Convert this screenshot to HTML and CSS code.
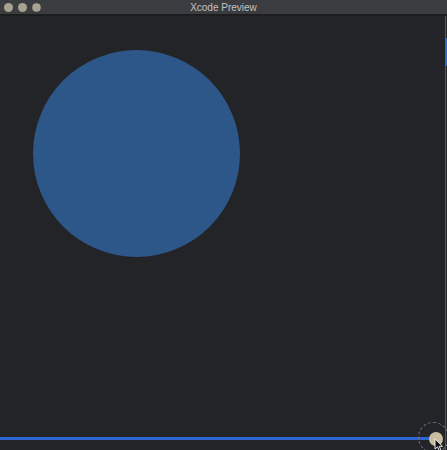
FILE: index.html
```html
<!DOCTYPE html>
<html>
<head>
<meta charset="utf-8">
<title>Xcode Preview</title>
<link rel="stylesheet" href="styles.css">
</head>
<body>
<div class="window">
  <div class="titlebar">
    <div class="lights">
      <span class="light"></span>
      <span class="light"></span>
      <span class="light light-dotted"></span>
    </div>
    <div class="title">Xcode Preview</div>
  </div>
  <div class="canvas">
    <div class="circle"></div>
    <div class="scroll-edge"><div class="scroll-thumb"></div></div>
    <div class="track"></div>
    <div class="knob-ring"></div>
    <div class="knob"></div>
    <svg class="cursor" width="10" height="14" viewBox="0 0 10 14">
      <path d="M1 1 L1 11 L3.5 8.8 L5.4 13 L7 12.3 L5.2 8.3 L8.5 8.3 Z" fill="#111" stroke="#e8e8e8" stroke-width="1"/>
    </svg>
  </div>
</div>
</body>
</html>
```
FILE: styles.css
```css
html, body {
  margin: 0;
  padding: 0;
  background: #232427;
}
.window {
  width: 447px;
  height: 450px;
  display: flex;
  flex-direction: column;
  font-family: "Liberation Sans", Arial, sans-serif;
  overflow: hidden;
}
.titlebar {
  height: 14px;
  flex: 0 0 14px;
  background: #3b3c3f;
  border-bottom: 2px solid #1c1d1f;
  position: relative;
  display: flex;
  align-items: center;
}
.lights {
  display: flex;
  gap: 5px;
  padding-left: 3.5px;
}
.light {
  width: 9px;
  height: 9px;
  border-radius: 50%;
  background: #a8a290;
}
.light-dotted {
  background: radial-gradient(circle, #a8a290 0.8px, #3b3c3f 1.2px) 0 0 / 2px 2px;
  border: 0.5px solid #a8a290;
  box-sizing: border-box;
}
.title {
  position: absolute;
  left: 0;
  right: 0;
  top: 0;
  height: 14px;
  line-height: 15px;
  text-align: center;
  font-size: 10px;
  color: #c2c2c4;
}
.canvas {
  flex: 1;
  position: relative;
  background: #232427;
}
.circle {
  position: absolute;
  left: 33px;
  top: 34px;
  width: 207px;
  height: 207px;
  border-radius: 50%;
  background: #2d5689;
}
.scroll-edge {
  position: absolute;
  right: 1px;
  top: 0;
  bottom: 0;
  width: 1px;
  background: #55575c;
}
.scroll-thumb {
  position: absolute;
  left: 0;
  top: 22px;
  width: 3px;
  height: 28px;
  background: #2f68c9;
  border-radius: 1px;
}
.track {
  position: absolute;
  left: 0;
  top: 421px;
  width: 432px;
  height: 3px;
  background: #2d66d4;
}
.knob-ring {
  position: absolute;
  left: 418px;
  top: 406px;
  width: 31px;
  height: 31px;
  border-radius: 50%;
  border: 1.5px dashed #6b7488;
  box-sizing: border-box;
}
.knob {
  position: absolute;
  left: 429px;
  top: 416px;
  width: 14px;
  height: 14px;
  border-radius: 50%;
  background: #c9bea0;
}
.cursor {
  position: absolute;
  left: 434px;
  top: 422px;
}
```
